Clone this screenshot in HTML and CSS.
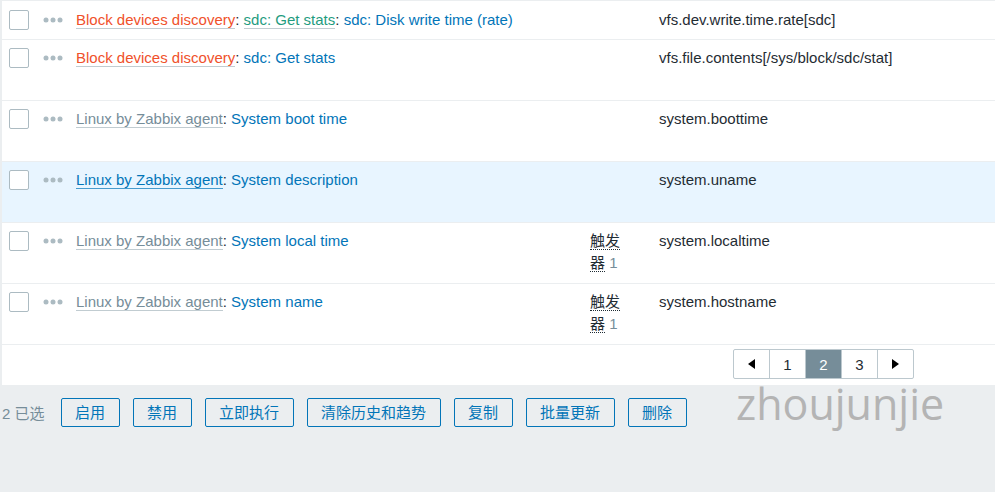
FILE: index.html
```html
<!DOCTYPE html>
<html>
<head>
<meta charset="utf-8">
<link rel="stylesheet" href="styles.css">
</head>
<body>
<div class="panel">
  <div class="row row-first">
    <div class="c-check"><span class="cb"></span></div>
    <div class="c-dots"><svg width="20" height="6" viewBox="0 0 20 6"><circle cx="3" cy="3" r="2.5"/><circle cx="10" cy="3" r="2.5"/><circle cx="17" cy="3" r="2.5"/></svg></div>
    <div class="c-name"><a class="lk orange">Block devices discovery</a>: <a class="lk teal">sdc: Get stats</a>: <a class="blue">sdc: Disk write time (rate)</a></div>
    <div class="c-trig"></div>
    <div class="c-key">vfs.dev.write.time.rate[sdc]</div>
  </div>
  <div class="row">
    <div class="c-check"><span class="cb"></span></div>
    <div class="c-dots"><svg width="20" height="6" viewBox="0 0 20 6"><circle cx="3" cy="3" r="2.5"/><circle cx="10" cy="3" r="2.5"/><circle cx="17" cy="3" r="2.5"/></svg></div>
    <div class="c-name"><a class="lk orange">Block devices discovery</a>: <a class="blue">sdc: Get stats</a></div>
    <div class="c-trig"></div>
    <div class="c-key">vfs.file.contents[/sys/block/sdc/stat]</div>
  </div>
  <div class="row">
    <div class="c-check"><span class="cb"></span></div>
    <div class="c-dots"><svg width="20" height="6" viewBox="0 0 20 6"><circle cx="3" cy="3" r="2.5"/><circle cx="10" cy="3" r="2.5"/><circle cx="17" cy="3" r="2.5"/></svg></div>
    <div class="c-name"><a class="lk grey">Linux by Zabbix agent</a>: <a class="blue">System boot time</a></div>
    <div class="c-trig"></div>
    <div class="c-key">system.boottime</div>
  </div>
  <div class="row row-hover">
    <div class="c-check"><span class="cb"></span></div>
    <div class="c-dots"><svg width="20" height="6" viewBox="0 0 20 6"><circle cx="3" cy="3" r="2.5"/><circle cx="10" cy="3" r="2.5"/><circle cx="17" cy="3" r="2.5"/></svg></div>
    <div class="c-name"><a class="lk lk-blue">Linux by Zabbix agent</a>: <a class="blue">System description</a></div>
    <div class="c-trig"></div>
    <div class="c-key">system.uname</div>
  </div>
  <div class="row">
    <div class="c-check"><span class="cb"></span></div>
    <div class="c-dots"><svg width="20" height="6" viewBox="0 0 20 6"><circle cx="3" cy="3" r="2.5"/><circle cx="10" cy="3" r="2.5"/><circle cx="17" cy="3" r="2.5"/></svg></div>
    <div class="c-name"><a class="lk grey">Linux by Zabbix agent</a>: <a class="blue">System local time</a></div>
    <div class="c-trig"><span class="abbr">触发</span><br><span class="abbr">器</span> <span class="cnt">1</span></div>
    <div class="c-key">system.localtime</div>
  </div>
  <div class="row">
    <div class="c-check"><span class="cb"></span></div>
    <div class="c-dots"><svg width="20" height="6" viewBox="0 0 20 6"><circle cx="3" cy="3" r="2.5"/><circle cx="10" cy="3" r="2.5"/><circle cx="17" cy="3" r="2.5"/></svg></div>
    <div class="c-name"><a class="lk grey">Linux by Zabbix agent</a>: <a class="blue">System name</a></div>
    <div class="c-trig"><span class="abbr">触发</span><br><span class="abbr">器</span> <span class="cnt">1</span></div>
    <div class="c-key">system.hostname</div>
  </div>
  <div class="pager-row">
    <div class="pager">
      <span class="pg"><svg width="7" height="10" viewBox="0 0 7 10"><polygon points="7,0 7,10 0,5"/></svg></span>
      <span class="pg">1</span>
      <span class="pg active">2</span>
      <span class="pg">3</span>
      <span class="pg"><svg width="7" height="10" viewBox="0 0 7 10"><polygon points="0,0 0,10 7,5"/></svg></span>
    </div>
  </div>
</div>
<div class="actions">
  <span class="selected">2 已选</span>
  <button class="btn">启用</button>
  <button class="btn">禁用</button>
  <button class="btn">立即执行</button>
  <button class="btn">清除历史和趋势</button>
  <button class="btn">复制</button>
  <button class="btn">批量更新</button>
  <button class="btn">删除</button>
</div>
<div class="watermark">zhoujunjie</div>
</body>
</html>
```
FILE: styles.css
```css
html, body {
  margin: 0;
  padding: 0;
}
body {
  background: #ebeef0;
  font-family: "Liberation Sans", Arial, "Noto Sans CJK SC", sans-serif;
  font-size: 15px;
  color: #1f2c33;
  width: 995px;
  height: 492px;
  overflow: hidden;
  position: relative;
}
.panel {
  margin-left: 2px;
  background: #fff;
  border-top: 1px solid #ebeef0;
}
.row {
  display: grid;
  grid-template-columns: 41px 33px 514px 69px 1fr;
  height: 61px;
  box-sizing: border-box;
  border-bottom: 1px solid #ebeef0;
  line-height: 21px;
}
.row > div {
  padding-top: 7px;
}
.row-first {
  height: 39px;
}
.row-first > div {
  padding-top: 8px;
}
.row-hover {
  background: #e8f5ff;
}
.c-check {
  padding-left: 7px;
}
.cb {
  display: block;
  margin-top: 1px;
  width: 20px;
  height: 20px;
  box-sizing: border-box;
  border: 1px solid #acbbc2;
  border-radius: 2px;
  background: #fff;
}
.c-dots svg {
  display: block;
  margin-top: 8px;
  fill: #acbbc2;
}
.c-name {
  white-space: nowrap;
}
a {
  text-decoration: none;
}
.lk {
  border-bottom: 1px solid rgba(118, 141, 153, 0.45);
}
.orange {
  color: #f0512b;
}
.teal {
  color: #1f9c80;
}
.grey {
  color: #768d99;
}
.blue {
  color: #0275b8;
}
.lk-blue {
  color: #0275b8;
  border-bottom-color: rgba(2, 117, 184, 0.7);
}
.c-trig {
  padding-right: 29px;
  line-height: 22px;
}
.abbr {
  border-bottom: 1px dotted #1f2c33;
}
.cnt {
  color: #768d99;
}
.pager-row {
  height: 40px;
  box-sizing: border-box;
  padding-top: 4px;
  padding-right: 81px;
  display: flex;
  justify-content: flex-end;
}
.pager {
  display: flex;
  height: 30px;
  box-sizing: border-box;
  border: 1px solid #bcc8ce;
  border-radius: 2px;
  overflow: hidden;
}
.pg {
  width: 35px;
  display: flex;
  align-items: center;
  justify-content: center;
  color: #1f2c33;
  font-size: 15px;
}
.pg + .pg {
  border-left: 1px solid #bcc8ce;
}
.pg svg {
  fill: #000;
}
.pg.active {
  background: #768d99;
  color: #fff;
}
.actions {
  display: flex;
  align-items: center;
  gap: 13px;
  padding: 13px 0 0 2px;
}
.selected {
  color: #768d99;
  margin-right: 3px;
}
.btn {
  height: 29px;
  box-sizing: border-box;
  padding: 0 13.5px;
  border: 1px solid #0275b8;
  border-radius: 2px;
  background: transparent;
  color: #0275b8;
  font-family: "Liberation Sans", Arial, "Noto Sans CJK SC", sans-serif;
  font-size: 15px;
  line-height: 27px;
}
.watermark {
  position: absolute;
  left: 736px;
  top: 380px;
  font-family: "Open Sans", sans-serif;
  font-size: 43px;
  line-height: 48px;
  color: #b4b4b4;
}
```
